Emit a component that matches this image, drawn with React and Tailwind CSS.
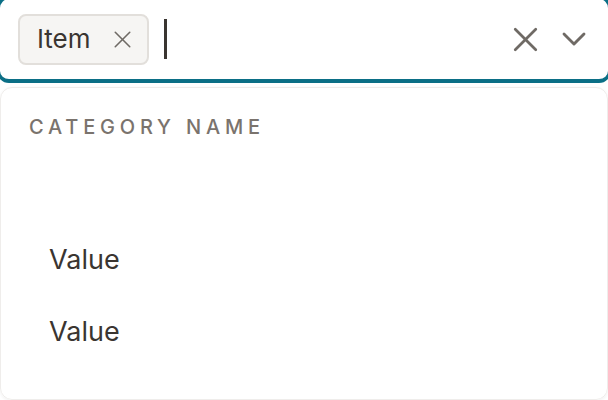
import React from 'react';
import { X, ChevronDown } from 'lucide-react';

const options = ['Value', 'Value'];

export default function App() {
  return (
    <div className="w-[608px] h-[400px] overflow-hidden bg-white flex flex-col font-['Inter',sans-serif] text-[#3a3531]">
      {/* select control */}
      <div className="-mx-[3px] -mt-[4px] h-[87px] shrink-0 rounded-[12px] border-[3px] border-b-4 border-[#0b6f86] bg-white flex items-center pl-[18px] pr-[14px]">
        <div className="flex items-center h-[51px] pl-[17px] pr-[10px] gap-[17px] rounded-[8px] border-2 border-[#e2dfdb] bg-[#f6f5f3]">
          <span className="text-[26px] leading-none">Item</span>
          <X size={29} strokeWidth={1.3} className="text-[#6f6a65]" />
        </div>
        <div className="ml-[15px] w-[3px] h-[40px] bg-[#3a3531]" />
        <div className="ml-auto flex items-center gap-[8px]">
          <X size={41} strokeWidth={1.6} className="text-[#6f6a65]" />
          <ChevronDown size={40} strokeWidth={1.7} className="text-[#6f6a65]" />
        </div>
      </div>

      {/* menu */}
      <div className="mt-[4px] flex-1 rounded-[12px] border border-[#efedeb] shadow-[0_1px_3px_rgba(0,0,0,0.06)]">
        <div className="pl-[28px] pt-[29px] text-[20px] font-medium tracking-[0.24em] text-[#7a736d] leading-none">
          CATEGORY NAME
        </div>
        <div className="mt-[87px]">
          {options.map((v, i) => (
            <div key={i} className="pl-[48px] h-[72px] flex items-center text-[27px]">
              {v}
            </div>
          ))}
        </div>
      </div>
    </div>
  );
}
